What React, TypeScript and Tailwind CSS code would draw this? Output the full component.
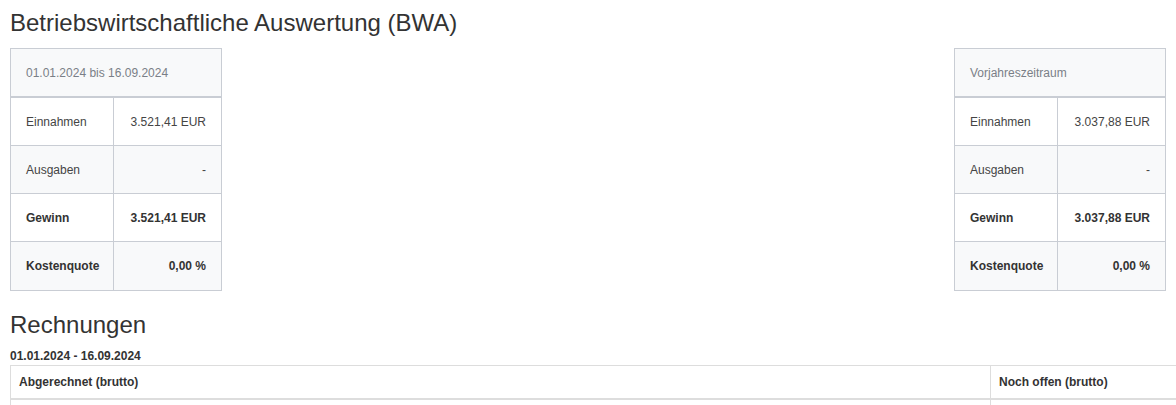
import React from "react";

type Row = { label: string; value: string; bold?: boolean; alt?: boolean };

function BwaTable({ header, rows }: { header: string; rows: Row[] }) {
  return (
    <div className="w-[212px] border border-[#c9cdd4] text-[12px]">
      <div className="h-[49px] bg-[#f8f9fa] border-b-2 border-[#c9cdd4] flex items-center px-[15px] text-[#7a7f87]">
        {header}
      </div>
      {rows.map((r, i) => (
        <div
          key={r.label}
          className={
            "flex " +
            (i < rows.length - 1 ? "h-[48px] border-b border-[#c9cdd4] " : "h-[48px] ") +
            (r.alt ? "bg-[#f8f9fa]" : "bg-white")
          }
        >
          <div
            className={
              "w-[103px] border-r border-[#c9cdd4] flex items-center pl-[15px] " +
              (r.bold ? "font-bold text-[#333]" : "text-[#444]")
            }
          >
            {r.label}
          </div>
          <div
            className={
              "flex-1 flex items-center justify-end pr-[15px] " +
              (r.bold ? "font-bold text-[#333]" : "text-[#444]")
            }
          >
            {r.value}
          </div>
        </div>
      ))}
    </div>
  );
}

export default function App() {
  return (
    <div
      className="w-[1176px] h-[405px] overflow-hidden bg-white text-[#333]"
      style={{ fontFamily: '"Liberation Sans", Arial, sans-serif' }}
    >
      <div className="px-[10px]">
        <h3 className="text-[24px] leading-[26px] pt-[10px] mb-[12px] text-[#333]">
          Betriebswirtschaftliche Auswertung (BWA)
        </h3>
        <div className="flex justify-between">
          <BwaTable
            header="01.01.2024 bis 16.09.2024"
            rows={[
              { label: "Einnahmen", value: "3.521,41 EUR" },
              { label: "Ausgaben", value: "-", alt: true },
              { label: "Gewinn", value: "3.521,41 EUR", bold: true },
              { label: "Kostenquote", value: "0,00 %", bold: true, alt: true },
            ]}
          />
          <BwaTable
            header="Vorjahreszeitraum"
            rows={[
              { label: "Einnahmen", value: "3.037,88 EUR" },
              { label: "Ausgaben", value: "-", alt: true },
              { label: "Gewinn", value: "3.037,88 EUR", bold: true },
              { label: "Kostenquote", value: "0,00 %", bold: true, alt: true },
            ]}
          />
        </div>
        <h3 className="text-[24px] leading-[26px] mt-[21px] mb-[11px] text-[#333]">Rechnungen</h3>
        <div className="text-[12px] font-bold leading-[15px] mb-[1px] text-[#333]">01.01.2024 - 16.09.2024</div>
        <div className="w-[1200px] border-t border-l border-[#ddd] text-[12px] font-bold text-[#333]">
          <div className="flex h-[34px] border-b-2 border-[#ddd]">
            <div className="w-[980px] border-r border-[#ddd] flex items-center pl-[8px]">
              Abgerechnet (brutto)
            </div>
            <div className="flex-1 flex items-center pl-[8px]">Noch offen (brutto)</div>
          </div>
          <div className="flex h-[20px]">
            <div className="w-[980px] border-r border-[#ddd]" />
            <div className="flex-1" />
          </div>
        </div>
      </div>
    </div>
  );
}
